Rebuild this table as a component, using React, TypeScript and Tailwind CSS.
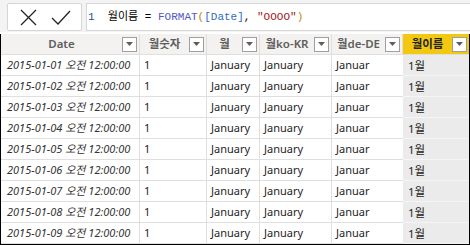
import React from 'react'

const font = { fontFamily: '"Noto Sans", "Noto Sans CJK KR", sans-serif' }
const mono = { fontFamily: '"Liberation Mono", "Noto Sans CJK KR", monospace' }

const columns = ['Date', '월숫자', '월', '월ko-KR', '월de-DE', '월이름']

function Dropdown() {
  return (
    <div className="w-[15px] h-[15px] mr-[2px] shrink-0 bg-white border border-[#a19f9d] flex items-center justify-center">
      <svg width="7" height="4" viewBox="0 0 7 4">
        <path d="M0 0 L7 0 L3.5 4 Z" fill="#605e5c" />
      </svg>
    </div>
  )
}

export default function App() {
  const rows = Array.from({ length: 9 }, (_, i) => `2015-01-0${i + 1}`)

  return (
    <div className="w-[470px] h-[245px] bg-white overflow-hidden" style={font}>
      {/* formula bar */}
      <div className="h-[32px] bg-[#f3f3f3] flex items-start pt-[3px] pl-[7px] gap-[4px]">
        <div className="w-[75px] h-[28px] bg-white border border-[#d6d6d6] rounded-[2px] flex items-center">
          <svg width="17" height="17" viewBox="0 0 17 17" className="ml-[12px]">
            <path d="M1 1 L16 16 M16 1 L1 16" stroke="#252423" strokeWidth="1.3" fill="none" />
          </svg>
          <svg width="20" height="15" viewBox="0 0 20 15" className="ml-[14px]">
            <path d="M1 8 L7 14 L19 1" stroke="#252423" strokeWidth="1.3" fill="none" />
          </svg>
        </div>
        <div className="flex-1 h-[28px] bg-white border border-r-0 border-[#d6d6d6] flex items-center pl-[1px]">
          <span className="whitespace-pre text-[11px] text-black" style={mono}>
            <span className="text-[#2b4a9e]">1</span>
            {'  월이름 = '}
            <span className="text-[#5457c8]">FORMAT</span>
            <span className="text-[#b78c00]">(</span>
            <span className="text-[#2f6bc4]">[Date]</span>
            {', '}
            <span className="text-[#a31515]">"OOOO"</span>
            <span className="text-[#b78c00]">)</span>
          </span>
        </div>
      </div>
      <div className="h-[2px] bg-white" />

      {/* grid */}
      <div className="border-l border-r border-b border-black h-[211px] grid grid-cols-[139px_67px_53px_72px_71px_66px] auto-rows-[21px]">
        {columns.map((c, i) => (
          <div
            key={c}
            className={
              i === 5
                ? 'flex items-center bg-[#f2c811] border-b border-[#e1dfdd]'
                : 'flex items-center bg-[#f3f2f1] border-b border-r border-[#e1dfdd]'
            }
          >
            <span
              className={
                i === 5
                  ? 'flex-1 text-center text-[11.5px] font-semibold text-[#252423]'
                  : 'flex-1 text-center text-[11.5px] font-semibold text-[#605e5c]'
              }
            >
              {c}
            </span>
            <Dropdown />
          </div>
        ))}
        {rows.map((d) => (
          <React.Fragment key={d}>
            <div className="flex items-center pt-[1px] pl-[6px] border-b border-r border-[#e1dfdd] text-[11px] italic text-[#333]">
              {d} 오전 12:00:00
            </div>
            <div className="flex items-center pt-[1px] pl-[4px] border-b border-r border-[#e1dfdd] text-[11px] text-[#252423]">1</div>
            <div className="flex items-center pt-[1px] pl-[4px] border-b border-r border-[#e1dfdd] text-[11px] text-[#252423] whitespace-nowrap overflow-hidden">January</div>
            <div className="flex items-center pt-[1px] pl-[4px] border-b border-r border-[#e1dfdd] text-[11px] text-[#252423]">January</div>
            <div className="flex items-center pt-[1px] pl-[4px] border-b border-[#e1dfdd] text-[11px] text-[#252423]">Januar</div>
            <div className="flex items-center pt-[1px] pl-[5px] border-b border-[#f5f5f5] bg-[#ebebeb] text-[11.5px] text-[#252423]">1월</div>
          </React.Fragment>
        ))}
      </div>
    </div>
  )
}
